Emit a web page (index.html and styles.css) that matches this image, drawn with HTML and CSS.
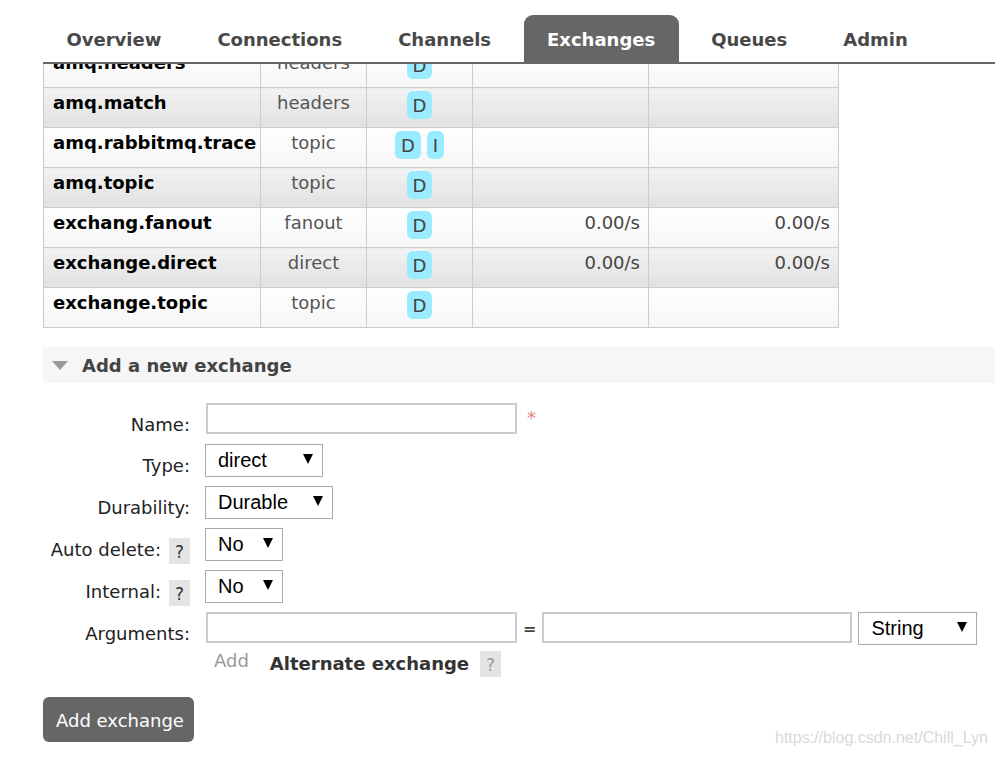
FILE: index.html
```html
<!DOCTYPE html>
<html>
<head>
<meta charset="utf-8">
<link rel="stylesheet" href="styles.css">
</head>
<body>
<div class="nav">
  <span class="tab">Overview</span>
  <span class="tab">Connections</span>
  <span class="tab">Channels</span>
  <span class="tab active">Exchanges</span>
  <span class="tab">Queues</span>
  <span class="tab">Admin</span>
</div>
<div class="table-clip">
  <table class="list">
    <colgroup>
      <col class="c-name"><col class="c-type"><col class="c-feat"><col class="c-rate1"><col class="c-rate2">
    </colgroup>
    <tr class="odd"><td class="name">amq.headers</td><td class="type">headers</td><td class="feat"><span class="badge">D</span></td><td class="rate"></td><td class="rate"></td></tr>
    <tr class="even"><td class="name">amq.match</td><td class="type">headers</td><td class="feat"><span class="badge">D</span></td><td class="rate"></td><td class="rate"></td></tr>
    <tr class="odd"><td class="name">amq.rabbitmq.trace</td><td class="type">topic</td><td class="feat"><span class="badge">D</span><span class="badge">I</span></td><td class="rate"></td><td class="rate"></td></tr>
    <tr class="even"><td class="name">amq.topic</td><td class="type">topic</td><td class="feat"><span class="badge">D</span></td><td class="rate"></td><td class="rate"></td></tr>
    <tr class="odd"><td class="name">exchang.fanout</td><td class="type">fanout</td><td class="feat"><span class="badge">D</span></td><td class="rate">0.00/s</td><td class="rate">0.00/s</td></tr>
    <tr class="even"><td class="name">exchange.direct</td><td class="type">direct</td><td class="feat"><span class="badge">D</span></td><td class="rate">0.00/s</td><td class="rate">0.00/s</td></tr>
    <tr class="odd"><td class="name">exchange.topic</td><td class="type">topic</td><td class="feat"><span class="badge">D</span></td><td class="rate"></td><td class="rate"></td></tr>
  </table>
</div>

<div class="section-head">
  <span class="tri"></span>
  <span class="section-title">Add a new exchange</span>
</div>

<div class="form">
  <div class="row first">
    <div class="lbl">Name:</div>
    <div class="ctrl">
      <span class="input name-input"></span>
      <span class="req">*</span>
    </div>
  </div>
  <div class="row">
    <div class="lbl">Type:</div>
    <div class="ctrl"><span class="select w-type"><span>direct</span><span class="arrow"></span></span></div>
  </div>
  <div class="row">
    <div class="lbl">Durability:</div>
    <div class="ctrl"><span class="select w-dur"><span>Durable</span><span class="arrow"></span></span></div>
  </div>
  <div class="row">
    <div class="lbl">Auto delete:<span class="help">?</span></div>
    <div class="ctrl"><span class="select w-no"><span>No</span><span class="arrow"></span></span></div>
  </div>
  <div class="row">
    <div class="lbl">Internal:<span class="help">?</span></div>
    <div class="ctrl"><span class="select w-no"><span>No</span><span class="arrow"></span></span></div>
  </div>
  <div class="row args">
    <div class="lbl">Arguments:</div>
    <div class="ctrl col">
      <div class="args-line">
        <span class="input arg-input"></span>
        <span class="eq">=</span>
        <span class="input arg-input2"></span>
        <span class="select w-str"><span>String</span><span class="arrow"></span></span>
      </div>
      <div class="add-line">
        <span class="add-link">Add</span>
        <span class="alt">Alternate exchange</span>
        <span class="help light">?</span>
      </div>
    </div>
  </div>
</div>

<div class="btn-wrap"><span class="btn">Add exchange</span></div>

<div class="watermark">https://blog.csdn.net/Chill_Lyn</div>
</body>
</html>
```
FILE: styles.css
```css
html, body {
  margin: 0;
  padding: 0;
  background: #fff;
}
body {
  font-family: "DejaVu Sans", Verdana, sans-serif;
  font-size: 18px;
  color: #484848;
  width: 995px;
  height: 757px;
  overflow: hidden;
  position: relative;
}

/* nav */
.nav {
  margin: 15px 0 0 43px;
  display: flex;
  gap: 9px;
  height: 47px;
  border-bottom: 2px solid #666;
}
.tab {
  padding: 0 23.5px;
  line-height: 49px;
  font-weight: bold;
  color: #484848;
  border-radius: 9px 9px 0 0;
}
.tab.active {
  background: #666;
  color: #fff;
}

/* table */
.table-clip {
  overflow: hidden;
}
.list {
  margin: -17px 0 0 43px;
  border-collapse: collapse;
  table-layout: fixed;
  width: 796px;
}
.c-name { width: 217px; }
.c-type { width: 106px; }
.c-feat { width: 106px; }
.c-rate1 { width: 176px; }
.c-rate2 { width: 190px; }
.list td {
  border: 1px solid #ccc;
  height: 40px;
  padding: 4px 8px 0;
  vertical-align: top;
  line-height: 22px;
  box-sizing: border-box;
}
.list tr.odd td { background: linear-gradient(#ffffff, #f5f5f5); }
.list tr.even td { background: linear-gradient(#f2f2f2, #e1e1e1); }
.list td.name {
  font-weight: bold;
  color: #000;
  padding-left: 9px;
  white-space: nowrap;
}
.list td.type {
  text-align: center;
  color: #555;
}
.list td.feat {
  text-align: center;
  padding-top: 3px;
  font-size: 0;
}
.list td.rate {
  text-align: right;
  color: #444;
}
.badge {
  display: inline-block;
  font-size: 18px;
  background: #99ebff;
  color: #444;
  border-radius: 6px;
  padding: 0 6px;
  height: 28px;
  line-height: 30px;
  margin: 0 3px;
}

/* section header */
.section-head {
  margin: 19px 0 0 43px;
  height: 36px;
  background: #f6f6f6;
  display: flex;
  align-items: center;
  padding-left: 9px;
}
.tri {
  width: 0;
  height: 0;
  border-left: 8px solid transparent;
  border-right: 8px solid transparent;
  border-top: 9px solid #999;
  margin-right: 14px;
}
.section-title {
  font-weight: bold;
  color: #444;
}

/* form */
.form {
  margin-top: 20px;
}
.row {
  display: flex;
  height: 42px;
}
.row.first {
  height: 41px;
}
.row.args {
  height: 70px;
}
.lbl {
  width: 147px;
  margin-left: 43px;
  height: 42px;
  display: flex;
  align-items: center;
  justify-content: flex-end;
  color: #222;
  white-space: nowrap;
}
.ctrl {
  margin-left: 15px;
  display: flex;
  align-items: flex-start;
}
.ctrl.col {
  flex-direction: column;
}
.help {
  display: inline-block;
  width: 21px;
  height: 26px;
  line-height: 28px;
  text-align: center;
  background: #e4e4e4;
  color: #333;
  margin-left: 8px;
  margin-top: 4px;
  font-size: 17px;
}
.help.light {
  color: #999;
  margin-left: 11px;
  margin-top: 0;
}
.input {
  display: inline-block;
  box-sizing: border-box;
  height: 31px;
  border: 2px solid #ccc;
  background: #fff;
}
.name-input {
  width: 311px;
  margin-left: 1px;
}
.req {
  color: #f08080;
  margin-left: 10px;
  font-size: 18px;
  line-height: 30px;
}
.select {
  display: inline-flex;
  box-sizing: border-box;
  align-items: center;
  justify-content: space-between;
  height: 33px;
  border: 1px solid #a9a9a9;
  background: #fff;
  padding: 0 9px 0 12px;
  font-family: "Liberation Sans", Arial, sans-serif;
  font-size: 20px;
  color: #000;
}
.arrow {
  width: 0;
  height: 0;
  border-left: 5px solid transparent;
  border-right: 5px solid transparent;
  border-top: 10px solid #000;
  margin-top: -3px;
}
.w-type { width: 118px; }
.w-dur { width: 128px; }
.w-no { width: 78px; }
.w-str { width: 119px; }

.args-line {
  display: flex;
  align-items: flex-start;
}
.arg-input {
  width: 311px;
  margin-left: 1px;
}
.eq {
  font-weight: bold;
  font-size: 16px;
  color: #444;
  margin: 0 6px 0 6px;
  line-height: 34px;
}
.arg-input2 {
  width: 310px;
}
.w-str {
  margin-left: 6px;
}
.add-line {
  display: flex;
  align-items: center;
  margin-top: 4px;
  height: 27px;
}
.add-link {
  color: #999;
  margin-left: 9px;
  margin-right: 21px;
  margin-top: -6px;
}
.alt {
  font-weight: bold;
  color: #333;
}

/* button */
.btn-wrap {
  margin: 15px 0 0 43px;
}
.btn {
  display: inline-block;
  background: #666;
  color: #fff;
  height: 45px;
  line-height: 47px;
  padding: 0 10px 0 13px;
  border-radius: 6px;
}

.watermark {
  position: absolute;
  left: 775px;
  top: 729px;
  font-family: "Liberation Sans", Arial, sans-serif;
  font-size: 16px;
  color: #d9d9d9;
}
```
